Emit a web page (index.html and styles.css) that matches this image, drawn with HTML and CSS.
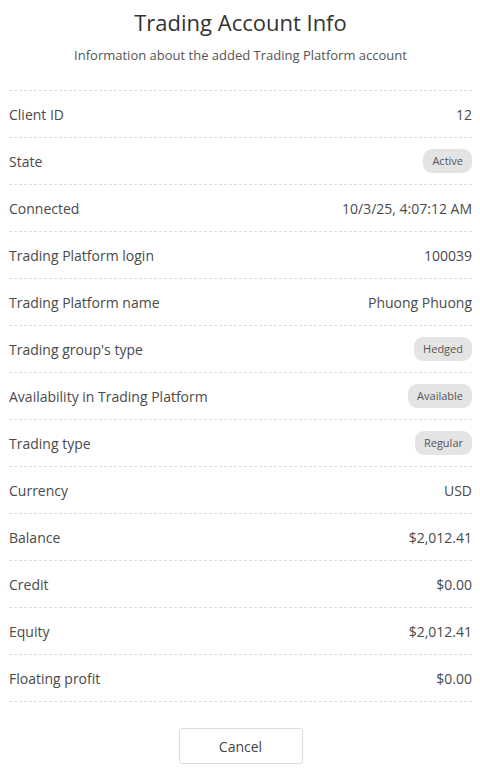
FILE: index.html
```html
<!DOCTYPE html>
<html lang="en">
<head>
  <meta charset="UTF-8" />
  <meta name="viewport" content="width=device-width, initial-scale=1.0"/>
  <title>Trading Account Info</title>
  <link rel="stylesheet" href="styles.css">
</head>
<body>
  <div class="modal">
    <h1>Trading Account Info</h1>
    <p class="subtitle">Information about the added Trading Platform account</p>

    <div class="info-list">
      <div class="row"><span>Client ID</span><span>12</span></div>
      <div class="row"><span>State</span><span class="tag">Active</span></div>
      <div class="row"><span>Connected</span><span>10/3/25, 4:07:12 AM</span></div>
      <div class="row"><span>Trading Platform login</span><span>100039</span></div>
      <div class="row"><span>Trading Platform name</span><span>Phuong Phuong</span></div>
      <div class="row"><span>Trading group's type</span><span class="tag">Hedged</span></div>
      <div class="row"><span>Availability in Trading Platform</span><span class="tag">Available</span></div>
      <div class="row"><span>Trading type</span><span class="tag">Regular</span></div>
      <div class="row"><span>Currency</span><span>USD</span></div>
      <div class="row"><span>Balance</span><span>$2,012.41</span></div>
      <div class="row"><span>Credit</span><span>$0.00</span></div>
      <div class="row"><span>Equity</span><span>$2,012.41</span></div>
      <div class="row"><span>Floating profit</span><span>$0.00</span></div>
    </div>

    <div class="actions">
      <button type="button">Cancel</button>
    </div>
  </div>
</body>
</html>
```

FILE: styles.css
```css
body {
  margin: 0;
  font-family: "Open Sans", Lato, sans-serif;
  color: #4a4a4a;
  background: #fff;
}
.modal {
  padding: 7px 8px 0 9px;
}
h1 {
  margin: 0;
  font-size: 22px;
  font-weight: 400;
  line-height: 30px;
  text-align: center;
  color: #333;
}
.subtitle {
  margin: 9px 0 0;
  font-size: 13px;
  line-height: 18px;
  text-align: center;
  color: #555;
}
.info-list {
  margin-top: 26px;
  border-top: 1px dashed #ddd;
}
.row {
  display: flex;
  justify-content: space-between;
  align-items: center;
  height: 46px;
  border-bottom: 1px dashed #ddd;
  font-size: 14px;
}
.tag {
  background: #e4e4e4;
  color: #555;
  font-size: 11px;
  line-height: 14px;
  padding: 5px 9px;
  border-radius: 9px;
}
.actions {
  display: flex;
  justify-content: center;
  margin-top: 26px;
}
button {
  width: 124px;
  height: 36px;
  background: #fff;
  border: 1px solid #ddd;
  border-radius: 3px;
  font-family: inherit;
  font-size: 14px;
  color: #444;
  cursor: pointer;
}
```
